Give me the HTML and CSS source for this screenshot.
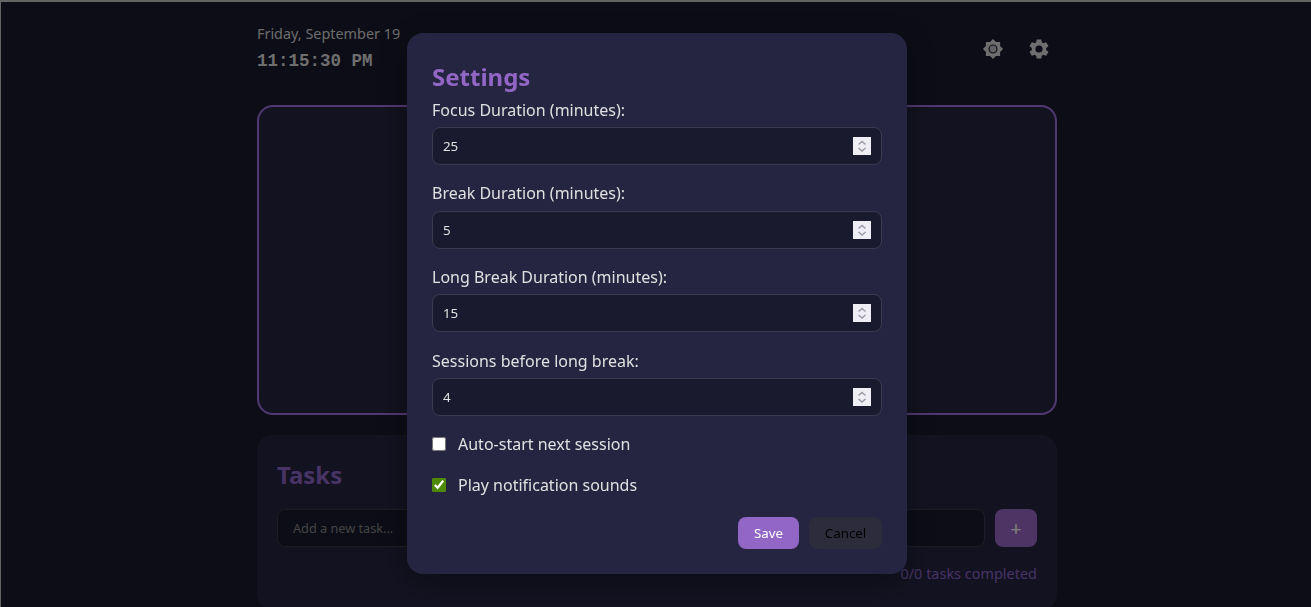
FILE: index.html
```html
<!DOCTYPE html>
<html lang="en">
<head>
<meta charset="utf-8">
<title>Pomodoro</title>
<link rel="stylesheet" href="styles.css">
</head>
<body>
<div class="app">
  <header class="top">
    <div class="when">
      <div class="date">Friday, September 19</div>
      <div class="clock">11:15:30 PM</div>
    </div>
    <div class="tools">
      <svg class="tool" viewBox="-1.5 -1.5 27 27" aria-hidden="true"><path fill-rule="evenodd" d="M20 8.69V4h-4.69L12 .69 8.69 4H4v4.69L.69 12 4 15.31V20h4.69L12 23.31 15.31 20H20v-4.69L23.31 12 20 8.69zM12 6.9a5.1 5.1 0 1 1 0 10.2 5.1 5.1 0 0 1 0-10.2z"/><circle class="tool-core" cx="12" cy="12" r="3.8"/></svg>
      <svg class="tool" viewBox="0 0 24 24" aria-hidden="true"><path d="M19.14 12.94c.04-.3.06-.61.06-.94 0-.32-.02-.64-.07-.94l2.03-1.58a.49.49 0 0 0 .12-.61l-1.92-3.32a.49.49 0 0 0-.59-.22l-2.39.96c-.5-.38-1.03-.7-1.62-.94l-.36-2.54a.48.48 0 0 0-.48-.41h-3.84a.48.48 0 0 0-.47.41l-.36 2.54c-.59.24-1.13.57-1.62.94l-2.39-.96a.49.49 0 0 0-.59.22L2.74 8.87a.48.48 0 0 0 .12.61l2.03 1.58c-.05.3-.09.63-.09.94s.02.64.07.94l-2.03 1.58a.49.49 0 0 0-.12.61l1.92 3.32c.12.22.37.29.59.22l2.39-.96c.5.38 1.03.7 1.62.94l.36 2.54c.05.24.24.41.48.41h3.84c.24 0 .44-.17.47-.41l.36-2.54c.59-.24 1.13-.56 1.62-.94l2.39.96c.22.08.47 0 .59-.22l1.92-3.32a.48.48 0 0 0-.12-.61l-2.01-1.58zM12 15.6A3.6 3.6 0 1 1 12 8.4a3.6 3.6 0 0 1 0 7.2z"/></svg>
    </div>
  </header>
  <section class="timer"></section>
  <section class="tasks">
    <h2 class="tasks-title">Tasks</h2>
    <div class="task-form">
      <input class="task-input" type="text" placeholder="Add a new task...">
      <button class="task-add" type="button">+</button>
    </div>
    <div class="task-count">0/0 tasks completed</div>
  </section>
</div>
<div class="overlay">
  <div class="modal">
    <h2 class="modal-title">Settings</h2>
    <div class="field">
      <label class="field-label" for="f1">Focus Duration (minutes):</label>
      <div class="num-wrap">
        <input class="num" id="f1" type="number" value="25">
        <svg class="spin" viewBox="0 0 18 18" aria-hidden="true"><path d="M5.5 7.5 9 4.5l3.5 3M5.5 11 9 14l3.5-3"/></svg>
      </div>
    </div>
    <div class="field">
      <label class="field-label" for="f2">Break Duration (minutes):</label>
      <div class="num-wrap">
        <input class="num" id="f2" type="number" value="5">
        <svg class="spin" viewBox="0 0 18 18" aria-hidden="true"><path d="M5.5 7.5 9 4.5l3.5 3M5.5 11 9 14l3.5-3"/></svg>
      </div>
    </div>
    <div class="field">
      <label class="field-label" for="f3">Long Break Duration (minutes):</label>
      <div class="num-wrap">
        <input class="num" id="f3" type="number" value="15">
        <svg class="spin" viewBox="0 0 18 18" aria-hidden="true"><path d="M5.5 7.5 9 4.5l3.5 3M5.5 11 9 14l3.5-3"/></svg>
      </div>
    </div>
    <div class="field">
      <label class="field-label" for="f4">Sessions before long break:</label>
      <div class="num-wrap">
        <input class="num" id="f4" type="number" value="4">
        <svg class="spin" viewBox="0 0 18 18" aria-hidden="true"><path d="M5.5 7.5 9 4.5l3.5 3M5.5 11 9 14l3.5-3"/></svg>
      </div>
    </div>
    <label class="check"><input class="box" type="checkbox"><span>Auto-start next session</span></label>
    <label class="check"><input class="box" type="checkbox" checked><span>Play notification sounds</span></label>
    <div class="actions">
      <button class="btn btn-save" type="button">Save</button>
      <button class="btn btn-cancel" type="button">Cancel</button>
    </div>
  </div>
</div>
</body>
</html>
```
FILE: styles.css
```css
* { box-sizing: border-box; }
html, body { height: 100%; }
body {
  margin: 0;
  padding-left: 2px;
  overflow: hidden;
  background: #1a1a2e;
  border-top: 2px solid #c8c8c8;
  border-left: 1px solid #c8c8c8;
  font-family: "Noto Sans", sans-serif;
  color: #e0e0e0;
}
.app { width: 800px; margin: 0 auto; padding-top: 21px; }
.top { display: flex; justify-content: space-between; align-items: flex-start; height: 82px; }
.date { font-size: 14.4px; line-height: 20px; color: #d8d8d8; margin-top: 1px; }
.clock { font-family: "Liberation Mono", monospace; font-weight: 700; font-size: 17.5px; line-height: 20px; color: #ddd; margin-top: 7px; }
.tools { display: flex; gap: 22px; padding-top: 14px; padding-right: 6px; }
.tool { width: 24px; height: 24px; fill: #ddd; display: block; }
.tool-core { fill: #c4c4c8; }
.timer { height: 310px; background: #252542; border: 2px solid #a070e0; border-radius: 16px; }
.tasks { height: 175px; margin-top: 20px; background: #252542; border-radius: 16px; padding: 20px; }
.tasks-title { margin: 0 0 14px; font-size: 24px; line-height: 40px; font-weight: 700; color: #8f66c8; }
.task-form { display: flex; gap: 10px; }
.task-input { flex: 1; height: 38px; padding: 0 15px; background: #1a1a2e; border: 1px solid #3a3a50; border-radius: 8px; font: 12.7px "Noto Sans", sans-serif; color: #e0e0e0; }
.task-input::placeholder { color: #888; }
.task-add { width: 42px; height: 38px; border: 0; border-radius: 8px; background: #9b68c8; color: #fff; font: 20px "Noto Sans", sans-serif; padding: 0; }
.task-count { margin-top: 17px; text-align: right; font-size: 14.4px; line-height: 20px; color: #8f66c8; letter-spacing: .03px; }
.overlay { position: fixed; inset: 0; padding-left: 3px; background: rgba(0,0,0,.5); display: flex; justify-content: center; align-items: center; }
.modal { width: 500px; height: 541px; padding: 24px 25px; background: #252542; border-radius: 16px; box-shadow: 0 8px 32px rgba(0,0,0,.3); }
.modal-title { margin: 0 0 .5px; font-size: 24px; line-height: 40px; font-weight: 700; color: #9166c4; }
.field { margin-bottom: 16.3px; }
.field-label { display: block; font-size: 16px; line-height: 24px; color: #e0e0e0; margin-bottom: 5.4px; }
.num-wrap { position: relative; }
.num { display: block; width: 100%; height: 38px; padding: 0 10px; background: #1a1a2e; border: 1px solid #3a3a50; border-radius: 8px; font: 13.33px "Noto Sans", sans-serif; color: #e0e0e0; appearance: textfield; }
.num::-webkit-inner-spin-button { display: none; }
.spin { position: absolute; right: 11px; top: 10px; width: 18px; height: 18px; background: #efeef5; fill: none; stroke: #9a9aa8; stroke-width: 1.5; }
.check { display: flex; align-items: center; gap: 12px; height: 24px; margin-bottom: 17px; font-size: 16px; color: #e0e0e0; }
.box { width: 14px; height: 14px; margin: 0; accent-color: #4e8a00; }
.actions { display: flex; justify-content: flex-end; gap: 10px; margin-top: 20px; }
.btn { height: 32px; border: 0; border-radius: 8px; font: 13.33px "Noto Sans", sans-serif; padding: 0; }
.btn-save { width: 61px; background: #9166c4; color: #fff; }
.btn-cancel { width: 73px; background: #2c2c3c; color: #000; }
```
